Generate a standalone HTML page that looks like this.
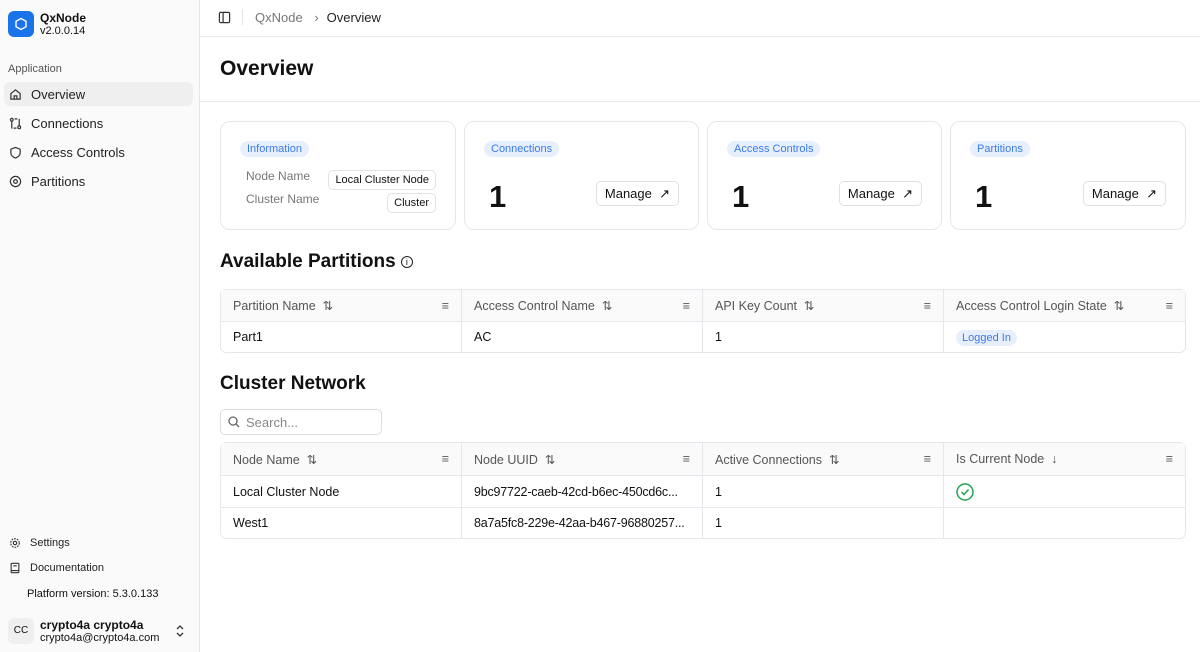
<!DOCTYPE html><html><head><style>
*{box-sizing:border-box;margin:0;padding:0}
body{width:1200px;height:652px;font-family:"Liberation Sans",sans-serif;background:#fff;color:#111;position:relative;overflow:hidden;font-size:13px}
.sb{position:absolute;left:0;top:0;width:200px;height:652px;background:#fafafa;border-right:1px solid #e6e6e6}
.a{position:absolute}
.nav{position:absolute;left:4px;width:189px;height:24px;display:flex;align-items:center;padding-left:5px;font-size:13px;color:#222;border-radius:6px}
.nav svg{margin-right:9px}
.card{position:absolute;top:121px;height:109px;border:1px solid #e4e7ec;border-radius:10px}
.badge{position:absolute;left:19px;top:19px;background:#e8effc;color:#3b7be8;font-size:11px;padding:2px 7px;border-radius:9px}
.big{position:absolute;left:24px;top:57px;font-size:31px;font-weight:bold}
.btn{position:absolute;right:19px;top:59px;height:25px;border:1px solid #e0e0e0;border-radius:5px;padding:0 8px;display:flex;align-items:center;font-size:13px;color:#111}
.tag{position:absolute;border:1px solid #e2e2e2;border-radius:5px;font-size:11px;padding:3px 6px;background:#fff}
table{position:absolute;left:220px;width:966px;border-collapse:separate;border-spacing:0;border:1px solid #e4e7ec;border-radius:6px;font-size:12.5px;table-layout:fixed}
td{border-right:1px solid #e4e7ec;border-top:1px solid #e4e7ec;padding:0 12px;height:31px;white-space:nowrap;overflow:hidden}
td:last-child{border-right:none}
tr:first-child td{border-top:none;background:#fafafa;color:#555}
.h{display:flex;justify-content:space-between;align-items:center}
</style></head><body>
<div class="sb">
<div class="a" style="left:8px;top:11px;width:26px;height:26px;background:#1a73e8;border-radius:6px"><svg width="26" height="26" viewBox="0 0 26 26"><path d="M13 7.5l5 2.8v5.4l-5 2.8-5-2.8v-5.4z" fill="none" stroke="#fff" stroke-width="1.4"/></svg></div>
<div class="a" style="left:40px;top:11px;font-size:12px;font-weight:bold">QxNode</div>
<div class="a" style="left:40px;top:25px;font-size:11px">v2.0.0.14</div>
<div class="a" style="left:8px;top:63px;font-size:11px;color:#555">Application</div>
<div class="nav" style="top:82px;background:#efefef"><svg width="13" height="13" viewBox="0 0 14 14" fill="none" stroke="#333" stroke-width="1.3"><path d="M2 6l5-4 5 4v6H2z M5.5 12V8.5h3V12"/></svg>Overview</div>
<div class="nav" style="top:111px"><svg width="13" height="13" viewBox="0 0 14 14" fill="none" stroke="#333" stroke-width="1.3"><circle cx="3" cy="3" r="1.5"/><circle cx="11" cy="11" r="1.5"/><path d="M3 4.5v8M11 9.5V2M6 2h3M5 12h3"/></svg>Connections</div>
<div class="nav" style="top:140px"><svg width="13" height="13" viewBox="0 0 14 14" fill="none" stroke="#333" stroke-width="1.3"><path d="M7 1.5l5 2v4c0 3-2.5 4.5-5 5.5-2.5-1-5-2.5-5-5.5v-4z"/></svg>Access Controls</div>
<div class="nav" style="top:169px"><svg width="13" height="13" viewBox="0 0 14 14" fill="none" stroke="#333" stroke-width="1.3"><circle cx="7" cy="7" r="5.5"/><circle cx="7" cy="7" r="2"/></svg>Partitions</div>
<div class="nav" style="top:531px;font-size:11px"><svg width="12" height="12" viewBox="0 0 14 14" fill="none" stroke="#333" stroke-width="1.3"><circle cx="7" cy="7" r="2"/><circle cx="7" cy="7" r="5" stroke-dasharray="2 1.2"/></svg>Settings</div>
<div class="nav" style="top:556px;font-size:11px"><svg width="12" height="12" viewBox="0 0 14 14" fill="none" stroke="#333" stroke-width="1.3"><rect x="2.5" y="1.5" width="9" height="11" rx="1"/><path d="M5 4.5h4M2.5 10h9"/></svg>Documentation</div>
<div class="a" style="left:27px;top:588px;font-size:11px">Platform version: 5.3.0.133</div>
<div class="a" style="left:8px;top:618px;width:26px;height:26px;background:#efefef;border-radius:6px;font-size:10px;text-align:center;line-height:26px">CC</div>
<div class="a" style="left:40px;top:618px;font-size:12px;font-weight:bold">crypto4a crypto4a</div>
<div class="a" style="left:40px;top:632px;font-size:11px">crypto4a@crypto4a.com</div>
<svg class="a" style="left:174px;top:624px" width="12" height="14" viewBox="0 0 12 14" fill="none" stroke="#333" stroke-width="1.3"><path d="M3 5l3-3 3 3M3 9l3 3 3-3"/></svg>
</div>
<svg class="a" style="left:218px;top:11px" width="13" height="13" viewBox="0 0 14 14" fill="none" stroke="#333" stroke-width="1.3"><rect x="1.5" y="1.5" width="11" height="11" rx="1.5"/><path d="M5.5 1.5v11"/></svg>
<div class="a" style="left:242px;top:9px;width:1px;height:16px;background:#e4e4e4"></div>
<div class="a" style="left:255px;top:10px;font-size:13px;color:#777">QxNode <span style="margin:0 8px">›</span><span style="color:#222">Overview</span></div>
<div class="a" style="left:200px;top:36px;width:1000px;height:1px;background:#e8e8e8"></div>
<div class="a" style="left:220px;top:57px;font-size:21px;font-weight:bold">Overview</div>
<div class="a" style="left:200px;top:101px;width:1000px;height:1px;background:#e8e8e8"></div>
<div class="card" style="left:220px;width:236px"><div class="badge">Information</div>
<div class="a" style="left:25px;top:47px;color:#777;font-size:12px">Node Name</div>
<div class="a" style="left:25px;top:70px;color:#777;font-size:12px">Cluster Name</div>
<div class="tag" style="right:19px;top:48px">Local Cluster Node</div>
<div class="tag" style="right:19px;top:71px">Cluster</div></div>
<div class="card" style="left:464px;width:235px"><div class="badge">Connections</div><div class="big">1</div><div class="btn">Manage&nbsp;&nbsp;↗</div></div>
<div class="card" style="left:707px;width:235px"><div class="badge">Access Controls</div><div class="big">1</div><div class="btn">Manage&nbsp;&nbsp;↗</div></div>
<div class="card" style="left:950px;width:236px"><div class="badge">Partitions</div><div class="big">1</div><div class="btn">Manage&nbsp;&nbsp;↗</div></div>
<div class="a" style="left:220px;top:251px;font-size:19px;font-weight:bold">Available Partitions <span style="font-weight:normal;border:1.3px solid #222;border-radius:50%;display:inline-block;width:12px;height:12px;line-height:10px;text-align:center;font-size:9px;vertical-align:2px">i</span></div>
<table style="top:289px"><tr><td><div class="h"><span>Partition Name &nbsp;⇅</span><span>≡</span></div></td><td><div class="h"><span>Access Control Name &nbsp;⇅</span><span>≡</span></div></td><td><div class="h"><span>API Key Count &nbsp;⇅</span><span>≡</span></div></td><td><div class="h"><span>Access Control Login State &nbsp;⇅</span><span>≡</span></div></td></tr>
<tr><td>Part1</td><td>AC</td><td>1</td><td><span style="background:#e8effc;color:#3b7be8;font-size:11px;padding:2px 6px;border-radius:9px">Logged In</span></td></tr></table>
<div class="a" style="left:220px;top:373px;font-size:19px;font-weight:bold">Cluster Network</div>
<div class="a" style="left:220px;top:409px;width:162px;height:26px;border:1px solid #ddd;border-radius:5px;font-size:13px;color:#888;padding:5px 0 0 25px">Search...
<svg class="a" style="left:7px;top:6px" width="12" height="12" viewBox="0 0 12 12" fill="none" stroke="#666" stroke-width="1.3"><circle cx="5" cy="5" r="4"/><path d="M8 8l3 3"/></svg></div>
<table style="top:442px"><tr><td style="height:32px"><div class="h"><span>Node Name &nbsp;⇅</span><span>≡</span></div></td><td><div class="h"><span>Node UUID &nbsp;⇅</span><span>≡</span></div></td><td><div class="h"><span>Active Connections &nbsp;⇅</span><span>≡</span></div></td><td><div class="h"><span>Is Current Node &nbsp;↓</span><span>≡</span></div></td></tr>
<tr><td style="height:32px">Local Cluster Node</td><td style="letter-spacing:-0.2px">9bc97722-caeb-42cd-b6ec-450cd6c...</td><td>1</td><td><svg width="18" height="18" viewBox="0 0 18 18" fill="none" stroke="#22a352" stroke-width="1.5" style="display:block"><circle cx="9" cy="9" r="8"/><path d="M5.5 9l2.5 2.5 4.5-5"/></svg></td></tr>
<tr><td>West1</td><td style="letter-spacing:-0.2px">8a7a5fc8-229e-42aa-b467-96880257...</td><td>1</td><td></td></tr></table>
</body></html>
